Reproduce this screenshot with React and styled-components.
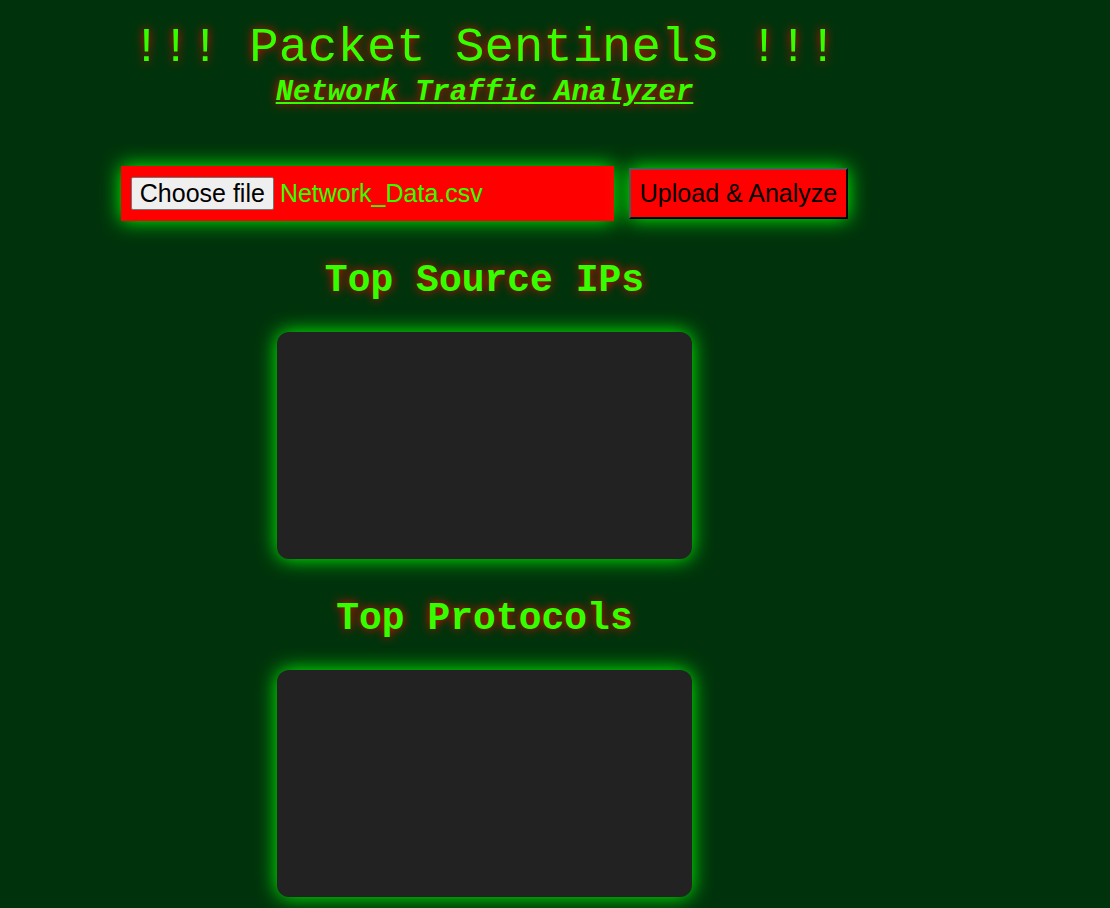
import React from 'react'
import styled, { createGlobalStyle } from 'styled-components'

const GlobalStyle = createGlobalStyle`
  html, body {
    margin: 0;
    padding: 0;
    background: #00330b;
  }
  body {
    min-height: 908px;
    font-family: "Courier New", Courier, "Nimbus Mono PS", FreeMono, "Liberation Mono", monospace;
  }
`

const Page = styled.div`
  width: 969px;
  display: flex;
  flex-direction: column;
  align-items: center;
  text-align: center;
  padding-bottom: 40px;
`

const Title = styled.h1`
  margin: 20px 0 0;
  font-size: 49px;
  line-height: 56px;
  font-weight: normal;
  color: #33ff00;
  text-shadow: 0 0 10px red;
  white-space: pre;
`

const Subtitle = styled.h2`
  margin: 0;
  font-size: 29px;
  line-height: 34px;
  font-weight: bold;
  font-style: italic;
  text-decoration: underline;
  color: #33ff00;
  text-shadow: 0 0 10px red;
`

const UploadRow = styled.div`
  margin-top: 56px;
  display: flex;
  align-items: center;
  gap: 15px;
`

const FileBox = styled.div`
  width: 493px;
  height: 55px;
  box-sizing: border-box;
  padding: 10px;
  display: flex;
  align-items: center;
  background: red;
  box-shadow: 0 0 20px #00ff00;
`

const ChooseButton = styled.span`
  font-family: "Liberation Sans", Arial, sans-serif;
  font-size: 25px;
  line-height: 29px;
  color: #000;
  background: #efefef;
  border: 1px solid #767676;
  border-radius: 2px;
  padding: 1px 8px;
  margin-right: 6px;
`

const FileName = styled.span`
  font-family: "Liberation Sans", Arial, sans-serif;
  font-size: 25px;
  color: #33ff00;
`

const UploadButton = styled.button`
  font-family: "Liberation Sans", Arial, sans-serif;
  font-size: 25px;
  line-height: 29px;
  color: #000;
  background: red;
  padding: 9px 9px;
  border-style: solid;
  border-width: 2px;
  border-color: #555 #000 #000 #555;
  box-shadow: 0 0 20px #00ff00;
`

const SectionTitle = styled.h2`
  margin: 38px 0 29px;
  font-size: 38px;
  line-height: 44px;
  font-weight: bold;
  color: #33ff00;
  text-shadow: 0 0 10px red;
`

const ChartCard = styled.div`
  width: 415px;
  height: 227px;
  background: #222;
  border-radius: 12px;
  box-shadow: 0 0 20px #00ff00;
`

export default function App() {
  return (
    <>
      <GlobalStyle />
      <Page>
        <Title>!!! Packet Sentinels !!!</Title>
        <Subtitle>Network Traffic Analyzer</Subtitle>

        <UploadRow>
          <FileBox>
            <ChooseButton>Choose file</ChooseButton>
            <FileName>Network_Data.csv</FileName>
          </FileBox>
          <UploadButton>Upload &amp; Analyze</UploadButton>
        </UploadRow>

        <SectionTitle>Top Source IPs</SectionTitle>
        <ChartCard />

        <SectionTitle>Top Protocols</SectionTitle>
        <ChartCard />
      </Page>
    </>
  )
}
